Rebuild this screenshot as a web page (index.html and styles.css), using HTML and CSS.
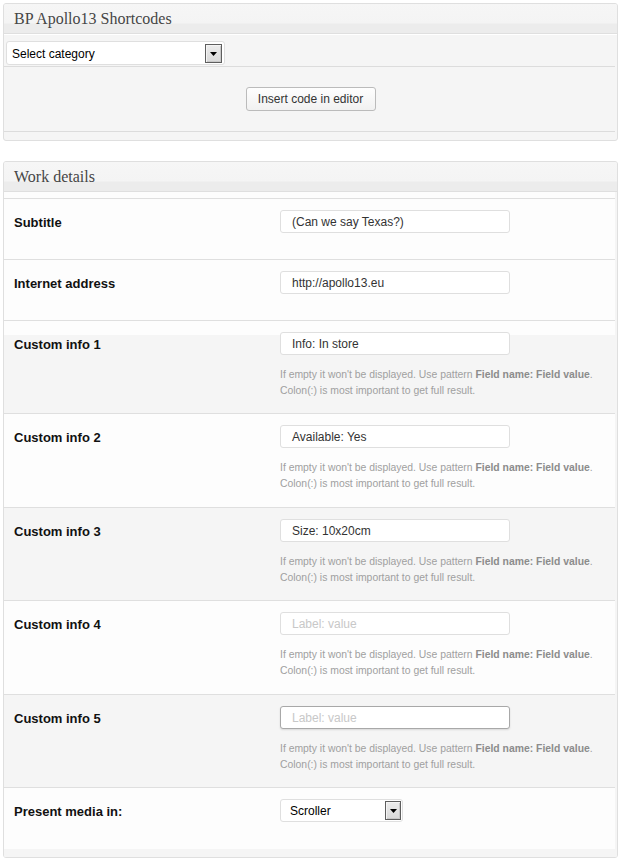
FILE: index.html
```html
<!DOCTYPE html>
<html>
<head>
<meta charset="utf-8">
<link rel="stylesheet" href="styles.css">
</head>
<body>
<div class="postbox">
  <div class="postbox-head"><h3>BP Apollo13 Shortcodes</h3></div>
  <div class="postbox-body shortcodes">
    <div class="fake-select cat-select">
      <span class="sel-text">Select category</span>
      <span class="sel-arrow"><svg width="7" height="4" viewBox="0 0 7 4"><polygon points="0,0 7,0 3.5,4" fill="#000"/></svg></span>
    </div>
    <div class="sep"></div>
    <div class="actions"><span class="button">Insert code in editor</span></div>
    <div class="sep"></div>
  </div>
</div>

<div class="postbox work">
  <div class="postbox-head"><h3>Work details</h3></div>
  <div class="postbox-body details">
    <div class="rows">
      <div class="row plain">
        <div class="label">Subtitle</div>
        <div class="field"><div class="text-input">(Can we say Texas?)</div></div>
      </div>
      <div class="row plain">
        <div class="label">Internet address</div>
        <div class="field"><div class="text-input">http://apollo13.eu</div></div>
      </div>
      <div class="row alt first-alt">
        <div class="label">Custom info 1</div>
        <div class="field">
          <div class="text-input">Info: In store</div>
          <p class="help">If empty it won't be displayed. Use pattern <b>Field name: Field value</b>.<br>Colon(:) is most important to get full result.</p>
        </div>
      </div>
      <div class="row tall">
        <div class="label">Custom info 2</div>
        <div class="field">
          <div class="text-input">Available: Yes</div>
          <p class="help">If empty it won't be displayed. Use pattern <b>Field name: Field value</b>.<br>Colon(:) is most important to get full result.</p>
        </div>
      </div>
      <div class="row alt">
        <div class="label">Custom info 3</div>
        <div class="field">
          <div class="text-input">Size: 10x20cm</div>
          <p class="help">If empty it won't be displayed. Use pattern <b>Field name: Field value</b>.<br>Colon(:) is most important to get full result.</p>
        </div>
      </div>
      <div class="row tall">
        <div class="label">Custom info 4</div>
        <div class="field">
          <div class="text-input placeholder">Label: value</div>
          <p class="help">If empty it won't be displayed. Use pattern <b>Field name: Field value</b>.<br>Colon(:) is most important to get full result.</p>
        </div>
      </div>
      <div class="row alt">
        <div class="label">Custom info 5</div>
        <div class="field">
          <div class="text-input placeholder focused">Label: value</div>
          <p class="help">If empty it won't be displayed. Use pattern <b>Field name: Field value</b>.<br>Colon(:) is most important to get full result.</p>
        </div>
      </div>
      <div class="row plain last">
        <div class="label">Present media in:</div>
        <div class="field">
          <div class="fake-select media-select">
            <span class="sel-text">Scroller</span>
            <span class="sel-arrow"><svg width="7" height="4" viewBox="0 0 7 4"><polygon points="0,0 7,0 3.5,4" fill="#000"/></svg></span>
          </div>
        </div>
      </div>
    </div>
    <div class="foot"></div>
  </div>
</div>
</body>
</html>
```

FILE: styles.css
```css
html, body {
  margin: 0;
  padding: 0;
  background: #ffffff;
}

body {
  font-family: "Liberation Sans", Arial, sans-serif;
  color: #222;
}

.postbox {
  box-sizing: border-box;
  width: 615px;
  margin: 3px 0 0 3px;
  border: 1px solid #dfdfdf;
  border-radius: 3px;
  background: #f5f5f5;
  overflow: hidden;
}

.postbox.work {
  margin-top: 20px;
}

.postbox-head {
  height: 29px;
  border-bottom: 1px solid #dfdfdf;
  background: linear-gradient(to bottom, #f6f6f6 0, #f4f4f4 19px, #ececec 20px, #ececec 100%);
}

.postbox-head h3 {
  margin: 0;
  padding-left: 10px;
  font-family: "Liberation Serif", Georgia, serif;
  font-weight: normal;
  font-size: 16px;
  line-height: 29px;
  color: #464646;
}

/* ---------- shortcodes box ---------- */
.shortcodes {
  border-top: 1px solid #fff;
  padding: 6px 2px 8px 0;
}

.fake-select {
  box-sizing: border-box;
  display: flex;
  align-items: center;
  justify-content: space-between;
  background: #fff;
  border: 1px solid #dfdfdf;
  border-radius: 3px;
  font-size: 12px;
  color: #000;
}

.sel-text {
  padding-top: 1px;
}

.cat-select {
  width: 219px;
  height: 24px;
  margin-left: 2px;
  padding: 0 2px 0 5px;
}

.sel-arrow {
  box-sizing: border-box;
  display: flex;
  align-items: center;
  justify-content: center;
  width: 17px;
  height: 19px;
  border: 1px solid #5e5e5e;
  box-shadow: inset 1px 1px 0 #f4f4f4, inset -1px -1px 0 #c8c8c8;
  background: linear-gradient(to bottom, #ececec, #d9d9d9);
}

.sel-arrow svg {
  display: block;
  margin-top: 1px;
}

.sep {
  height: 0;
  border-top: 1px solid #dcdcdc;
}

.cat-select + .sep {
  margin-top: 1px;
}

.actions {
  display: flex;
  justify-content: center;
  padding: 20px 0;
}

.button {
  box-sizing: border-box;
  display: inline-block;
  width: 130px;
  height: 24px;
  line-height: 23px;
  text-align: center;
  border: 1px solid #bbb;
  border-radius: 3px;
  background: linear-gradient(to bottom, #fefefe, #f1f1f1);
  font-size: 12px;
  color: #333;
  margin-left: 2px;
}

/* ---------- work details box ---------- */
.details {
  padding: 0;
  background: #f5f5f5;
}

.rows {
  margin-right: 2px;
  padding-top: 6px;
  background: #fdfdfd;
}

.row {
  display: grid;
  grid-template-columns: 276px 1fr;
  border-top: 1px solid #dfdfdf;
  padding: 11px 0 14px 0;
  background: #fdfdfd;
}

.row.plain {
  padding-bottom: 26px;
}

.row.last {
  padding-bottom: 27px;
}

.row.tall {
  padding-bottom: 15px;
}

.row.alt {
  background: #f5f5f5;
}

.row.first-alt {
  background: linear-gradient(to bottom, #fdfdfd 0, #fdfdfd 14px, #f5f5f5 14px, #f5f5f5 100%);
}

.label {
  padding-left: 10px;
  height: 23px;
  line-height: 25px;
  font-weight: bold;
  font-size: 13px;
  color: #111;
}

.text-input {
  box-sizing: border-box;
  width: 230px;
  height: 23px;
  line-height: 22px;
  padding-left: 11px;
  border: 1px solid #dfdfdf;
  border-radius: 3px;
  background: #fff;
  font-size: 12px;
  color: #333;
  white-space: nowrap;
}

.text-input.placeholder {
  color: #c8c8c8;
}

.text-input.focused {
  border-color: #a8a8a8;
  box-shadow: 0 1px 2px rgba(0, 0, 0, 0.12);
}

.help {
  margin: 12px 0 0 0;
  font-size: 10.4px;
  line-height: 16px;
  color: #a0a0a0;
  white-space: nowrap;
}

.help b {
  color: #8c8c8c;
}

.media-select {
  width: 123px;
  height: 23px;
  padding: 0 1px 0 9px;
}

.media-select .sel-arrow {
  width: 16px;
  height: 19px;
}

.foot {
  height: 8px;
  background: #f5f5f5;
}
```
